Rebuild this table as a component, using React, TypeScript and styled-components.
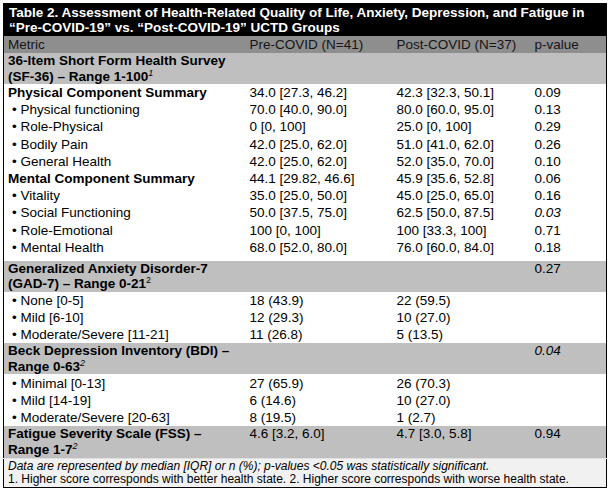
import React from 'react';
import styled, { createGlobalStyle } from 'styled-components';

const GlobalStyle = createGlobalStyle`
  html, body {
    margin: 0;
    padding: 0;
    background: #fff;
  }
  body {
    font-family: "Liberation Sans", Arial, sans-serif;
    color: #000;
  }
`;

const Page = styled.div`
  padding: 3px 4px 4px 3px;
`;

const Table = styled.table`
  width: 603px;
  border-collapse: collapse;
  table-layout: fixed;
  border: 1px solid #000;
  font-size: 13.5px;
`;

const Title = styled.caption`
  caption-side: top;
  text-align: left;
  background: #000;
  color: #fff;
  font-weight: bold;
  font-size: 13.5px;
  line-height: 15px;
  padding: 1px 5px 0 5px;
  border: 1px solid #000;
  border-bottom: none;
  white-space: nowrap;
`;

const HeadRow = styled.tr`
  background: #8e8e8e;
  color: #151515;
  height: 17px;
`;

const Th = styled.th`
  text-align: left;
  font-weight: normal;
  padding: 0 4px;
  line-height: 17px;
`;

const SectionRow = styled.tr<{ $tall?: boolean }>`
  background: #bfbfbf;
  height: ${(p) => (p.$tall ? 32 : 31)}px;
`;

const SectionCell = styled.td<{ $bold?: boolean }>`
  vertical-align: top;
  padding: 0 4px;
  line-height: 15.5px;
  font-weight: ${(p) => (p.$bold ? 'bold' : 'normal')};
`;

const DataRow = styled.tr`
  height: 17.2px;
`;

const Cell = styled.td<{ $bold?: boolean; $indent?: boolean; $italic?: boolean }>`
  padding: 0 4px 0 ${(p) => (p.$indent ? 8 : 4)}px;
  line-height: 17px;
  white-space: nowrap;
  font-weight: ${(p) => (p.$bold ? 'bold' : 'normal')};
  font-style: ${(p) => (p.$italic ? 'italic' : 'normal')};
`;

const Spacer = styled.tr`
  height: 5px;
`;

const Sup = styled.sup<{ $italic?: boolean }>`
  font-size: 9px;
  font-weight: normal;
  font-style: ${(p) => (p.$italic ? 'italic' : 'normal')};
  line-height: 0;
  vertical-align: 5px;
`;

const NoteRow = styled.tr`
  background: #f1f1f1;
`;

const NoteCell = styled.td`
  padding: 1px 4px 1px 4px;
  font-size: 12px;
  line-height: 13px;
  border-top: 1px solid #e0e0e0;
  white-space: nowrap;
`;

const Italic = styled.span`
  font-style: italic;
`;

type Item = { label: string; pre: string; post: string; p?: string; bold?: boolean; pItalic?: boolean };

const sf36: Item[] = [
  { label: 'Physical Component Summary', pre: '34.0 [27.3, 46.2]', post: '42.3 [32.3, 50.1]', p: '0.09', bold: true },
  { label: 'Physical functioning', pre: '70.0 [40.0, 90.0]', post: '80.0 [60.0, 95.0]', p: '0.13' },
  { label: 'Role-Physical', pre: '0 [0, 100]', post: '25.0 [0, 100]', p: '0.29' },
  { label: 'Bodily Pain', pre: '42.0 [25.0, 62.0]', post: '51.0 [41.0, 62.0]', p: '0.26' },
  { label: 'General Health', pre: '42.0 [25.0, 62.0]', post: '52.0 [35.0, 70.0]', p: '0.10' },
  { label: 'Mental Component Summary', pre: '44.1 [29.82, 46.6]', post: '45.9 [35.6, 52.8]', p: '0.06', bold: true },
  { label: 'Vitality', pre: '35.0 [25.0, 50.0]', post: '45.0 [25.0, 65.0]', p: '0.16' },
  { label: 'Social Functioning', pre: '50.0 [37.5, 75.0]', post: '62.5 [50.0, 87.5]', p: '0.03', pItalic: true },
  { label: 'Role-Emotional', pre: '100 [0, 100]', post: '100 [33.3, 100]', p: '0.71' },
  { label: 'Mental Health', pre: '68.0 [52.0, 80.0]', post: '76.0 [60.0, 84.0]', p: '0.18' },
];

const gad: Item[] = [
  { label: 'None [0-5]', pre: '18 (43.9)', post: '22 (59.5)' },
  { label: 'Mild [6-10]', pre: '12 (29.3)', post: '10 (27.0)' },
  { label: 'Moderate/Severe [11-21]', pre: '11 (26.8)', post: '5 (13.5)' },
];

const bdi: Item[] = [
  { label: 'Minimal [0-13]', pre: '27 (65.9)', post: '26 (70.3)' },
  { label: 'Mild [14-19]', pre: '6 (14.6)', post: '10 (27.0)' },
  { label: 'Moderate/Severe [20-63]', pre: '8 (19.5)', post: '1 (2.7)' },
];

const Rows = ({ items }: { items: Item[] }) => (
  <>
    {items.map((it) => (
      <DataRow key={it.label}>
        <Cell $bold={it.bold} $indent={!it.bold}>
          {it.bold ? it.label : `\u2022 ${it.label}`}
        </Cell>
        <Cell>{it.pre}</Cell>
        <Cell>{it.post}</Cell>
        <Cell $italic={it.pItalic}>{it.p ?? ''}</Cell>
      </DataRow>
    ))}
  </>
);

const App = () => (
  <Page>
    <GlobalStyle />
    <Table>
      <Title>
        Table 2. Assessment of Health-Related Quality of Life, Anxiety, Depression, and Fatigue in
        <br />
        “Pre-COVID-19” vs. “Post-COVID-19” UCTD Groups
      </Title>
      <colgroup>
        <col style={{ width: 242 }} />
        <col style={{ width: 147 }} />
        <col style={{ width: 138 }} />
        <col style={{ width: 76 }} />
      </colgroup>
      <thead>
        <HeadRow>
          <Th>Metric</Th>
          <Th>Pre-COVID (N=41)</Th>
          <Th>Post-COVID (N=37)</Th>
          <Th>p-value</Th>
        </HeadRow>
      </thead>
      <tbody>
        <SectionRow>
          <SectionCell $bold>
            36-Item Short Form Health Survey
            <br />
            (SF-36) – Range 1-100<Sup $italic>1</Sup>
          </SectionCell>
          <SectionCell />
          <SectionCell />
          <SectionCell />
        </SectionRow>
        <Rows items={sf36} />
        <Spacer>
          <td colSpan={4} />
        </Spacer>
        <SectionRow>
          <SectionCell $bold>
            Generalized Anxiety Disorder-7
            <br />
            (GAD-7) – Range 0-21<Sup>2</Sup>
          </SectionCell>
          <SectionCell />
          <SectionCell />
          <SectionCell>0.27</SectionCell>
        </SectionRow>
        <Rows items={gad} />
        <SectionRow>
          <SectionCell $bold>
            Beck Depression Inventory (BDI) –
            <br />
            Range 0-63<Sup $italic>2</Sup>
          </SectionCell>
          <SectionCell />
          <SectionCell />
          <SectionCell>
            <Italic>0.04</Italic>
          </SectionCell>
        </SectionRow>
        <Rows items={bdi} />
        <SectionRow $tall>
          <SectionCell $bold>
            Fatigue Severity Scale (FSS) –
            <br />
            Range 1-7<Sup $italic>2</Sup>
          </SectionCell>
          <SectionCell>4.6 [3.2, 6.0]</SectionCell>
          <SectionCell>4.7 [3.0, 5.8]</SectionCell>
          <SectionCell>0.94</SectionCell>
        </SectionRow>
        <NoteRow>
          <NoteCell colSpan={4}>
            <Italic>Data are represented by median [IQR] or n (%); p-values &lt;0.05 was statistically significant.</Italic>
            <br />
            1. Higher score corresponds with better health state. 2. Higher score corresponds with worse health state.
          </NoteCell>
        </NoteRow>
      </tbody>
    </Table>
  </Page>
);

export default App;
